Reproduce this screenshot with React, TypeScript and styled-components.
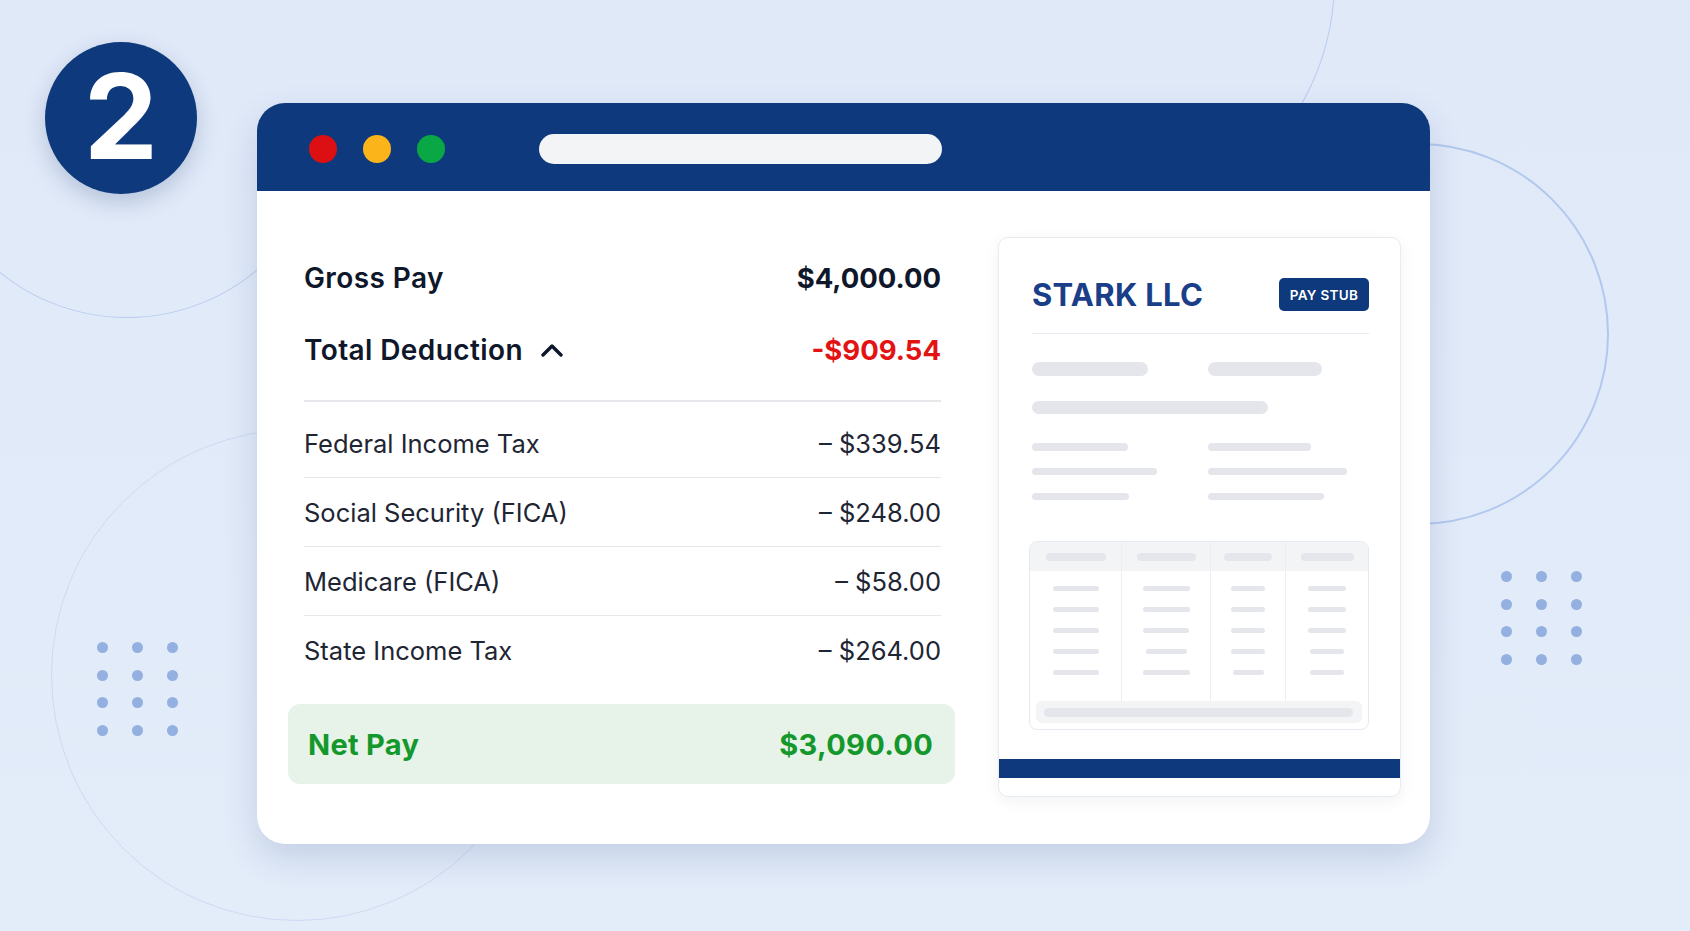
import React from "react";
import styled, { createGlobalStyle } from "styled-components";

const GlobalStyle = createGlobalStyle`
  html, body {
    margin: 0;
    padding: 0;
    background: #e1eaf8;
  }
  body {
    font-family: Inter, "Noto Sans", "Liberation Sans", sans-serif;
    -webkit-font-smoothing: antialiased;
  }
`;

const NAVY = "#0e397d";

type Side = "all" | "bottom" | "right";

const Page = styled.div`
  position: relative;
  width: 1690px;
  height: 931px;
  overflow: hidden;
  background: linear-gradient(180deg, #e0e9f8 0%, #e3ecf9 100%);
`;

// background decorations: thin rings, some only partly drawn
const Ring = styled.div<{ cx: number; cy: number; r: number; tone: string; w: number; side?: Side }>`
  position: absolute;
  left: ${p => p.cx - p.r}px;
  top: ${p => p.cy - p.r}px;
  width: ${p => p.r * 2}px;
  height: ${p => p.r * 2}px;
  border-radius: 50%;
  border: ${p => p.w}px solid transparent;
  ${p =>
    !p.side || p.side === "all"
      ? `border-color: ${p.tone};`
      : `border-${p.side}-color: ${p.tone};`}
  box-sizing: border-box;
  pointer-events: none;
`;

const DotGrid = styled.div<{ x: number; y: number }>`
  position: absolute;
  left: ${p => p.x}px;
  top: ${p => p.y}px;
  display: grid;
  grid-template-columns: repeat(3, 11px);
  grid-auto-rows: 11px;
  column-gap: 24px;
  row-gap: 16.5px;
`;

const Dot = styled.span`
  width: 11px;
  height: 11px;
  border-radius: 50%;
  background: #93b0e0;
`;

const Stage = styled.div`
  position: relative;
  display: flex;
  align-items: flex-start;
  gap: 60px;
  padding: 42px 0 0 45px;
`;

const StepBadge = styled.div`
  flex: none;
  width: 152px;
  height: 152px;
  border-radius: 50%;
  background: ${NAVY};
  color: #fff;
  display: flex;
  align-items: center;
  justify-content: center;
  font-size: 118px;
  font-weight: 700;
  line-height: 1;
  padding-bottom: 4px;
  box-sizing: border-box;
  box-shadow: 0 8px 22px rgba(22, 54, 110, 0.22);
`;

const BrowserWindow = styled.div`
  margin-top: 61px;
  width: 1173px;
  height: 741px;
  border-radius: 28px;
  background: #fff;
  overflow: hidden;
  display: flex;
  flex-direction: column;
  box-shadow: 0 14px 34px rgba(30, 64, 130, 0.16);
`;

const TitleBar = styled.div`
  flex: none;
  height: 88px;
  background: ${NAVY};
  display: flex;
  align-items: center;
  padding-left: 52px;
  padding-top: 3px;
  box-sizing: border-box;
`;

const Lights = styled.div`
  display: flex;
  gap: 26px;
`;

const Light = styled.span<{ color: string }>`
  width: 28px;
  height: 28px;
  border-radius: 50%;
  background: ${p => p.color};
`;

const UrlBar = styled.div`
  margin-left: 94px;
  width: 403px;
  height: 30px;
  border-radius: 15px;
  background: #f3f4f6;
`;

const WindowBody = styled.div`
  flex: 1;
  display: flex;
  align-items: flex-start;
  gap: 43px;
  padding: 0 29px 0 31px;
`;

const Summary = styled.div`
  width: 667px;
  padding-top: 65px;
  display: flex;
  flex-direction: column;
`;

const TotalRow = styled.div`
  height: 44px;
  padding: 0 14px 0 16px;
  display: flex;
  align-items: center;
  justify-content: space-between;
  & + & {
    margin-top: 28px;
  }
`;

const TotalLabel = styled.div`
  display: flex;
  align-items: center;
  gap: 17px;
  font-size: 28px;
  font-weight: 600;
  color: #0f172a;
  letter-spacing: 0.4px;
`;

const Amount = styled.div<{ tone?: string }>`
  font-size: 27.5px;
  font-weight: 700;
  color: ${p => p.tone || "#0f172a"};
`;

const Rule = styled.div`
  margin: 28px 14px 0 16px;
  height: 2px;
  background: #e5e7eb;
`;

const Deductions = styled.div`
  padding: 7px 14px 0 16px;
`;

const DeductionRow = styled.div`
  height: 69px;
  display: flex;
  align-items: center;
  justify-content: space-between;
  font-size: 25.5px;
  color: #1e2533;
  box-sizing: border-box;
  &:not(:last-child) {
    border-bottom: 1.5px solid #e6e8ec;
  }
`;

const NetPay = styled.div`
  margin-top: 19px;
  height: 80px;
  border-radius: 12px;
  background: #e7f2e8;
  display: flex;
  align-items: center;
  justify-content: space-between;
  padding: 0 22px 0 20px;
  font-size: 29px;
  font-weight: 700;
  color: #14982b;
  letter-spacing: 0.3px;
`;

// pay stub preview
const Stub = styled.div`
  margin-top: 46px;
  width: 403px;
  height: 560px;
  box-sizing: border-box;
  border: 1px solid #e8ebf0;
  border-radius: 10px;
  background: #fff;
  box-shadow: 0 4px 16px rgba(20, 40, 80, 0.06);
  overflow: hidden;
  display: flex;
  flex-direction: column;
`;

const StubInner = styled.div`
  padding: 40px 31px 0 33px;
  display: flex;
  flex-direction: column;
`;

const StubHead = styled.div`
  height: 33px;
  display: flex;
  align-items: center;
  justify-content: space-between;
`;

const Company = styled.div`
  font-size: 31px;
  font-weight: 700;
  color: #1a3e88;
  letter-spacing: 0.3px;
`;

const StubTag = styled.div`
  height: 33px;
  width: 90px;
  border-radius: 5px;
  background: ${NAVY};
  color: #fff;
  font-size: 13.5px;
  font-weight: 600;
  letter-spacing: 0.3px;
  display: flex;
  align-items: center;
  justify-content: center;
`;

const StubRule = styled.div`
  margin-top: 22px;
  height: 1px;
  background: #e6e9ef;
`;

const SkeletonRow = styled.div<{ gap: number }>`
  margin-top: ${p => p.gap}px;
  display: grid;
  grid-template-columns: 176px 1fr;
`;

const Bar = styled.span<{ w: number; h: number }>`
  display: block;
  width: ${p => p.w}px;
  height: ${p => p.h}px;
  border-radius: ${p => p.h / 2}px;
  background: #e4e6eb;
`;

const Table = styled.div`
  margin: 41px 0 0 -3px;
  width: 340px;
  height: 189px;
  box-sizing: border-box;
  border: 1.5px solid #e6e9ef;
  border-radius: 8px;
  overflow: hidden;
  display: flex;
  flex-direction: column;
`;

const Columns = styled.div`
  display: grid;
  grid-template-columns: 91px 89px 75px 1fr;
  height: 159px;
`;

const Column = styled.div`
  display: flex;
  flex-direction: column;
  align-items: center;
  & + & {
    border-left: 1.5px solid #eceef2;
  }
`;

const ColumnHead = styled.div`
  align-self: stretch;
  height: 29px;
  background: #f3f4f6;
  display: flex;
  align-items: center;
  justify-content: center;
`;

const ColumnLines = styled.div`
  padding-top: 15px;
  display: flex;
  flex-direction: column;
  align-items: center;
  gap: 16px;
`;

const TableFoot = styled.div`
  margin: 0 6px;
  height: 22px;
  border-radius: 6px;
  background: #f3f4f6;
  display: flex;
  align-items: center;
  padding: 0 8px;
`;

const StubStripe = styled.div`
  margin-top: 29px;
  height: 19px;
  background: ${NAVY};
`;

const Chevron = () => (
  <svg width="24" height="14" viewBox="0 0 24 14" fill="none">
    <polyline points="3,12 12,3 21,12" stroke="#0f172a" strokeWidth="3.4" strokeLinecap="round" strokeLinejoin="round" />
  </svg>
);

const deductions = [
  { label: "Federal Income Tax", amount: "\u2013 $339.54" },
  { label: "Social Security (FICA)", amount: "\u2013 $248.00" },
  { label: "Medicare (FICA)", amount: "\u2013 $58.00" },
  { label: "State Income Tax", amount: "\u2013 $264.00" },
];

const stubColumns = [
  { head: 60, lines: [46, 46, 46, 46, 46] },
  { head: 59, lines: [47, 47, 46, 41, 47] },
  { head: 48, lines: [34, 34, 34, 34, 31] },
  { head: 53, lines: [38, 38, 38, 34, 34] },
];

const skeleton = [
  { gap: 28, h: 14, left: 116, right: 114 },
  { gap: 25, h: 13, left: 236, right: 0 },
  { gap: 29, h: 8, left: 96, right: 103 },
  { gap: 17, h: 7, left: 125, right: 139 },
  { gap: 18, h: 7, left: 97, right: 116 },
];

const dots = Array.from({ length: 12 });

export default function App() {
  return (
    <>
      <GlobalStyle />
      <Page>
        <Ring cx={127} cy={116} r={202} tone="#b9cdef" w={1.5} side="bottom" />
        <Ring cx={1085} cy={-20} r={250} tone="#b9cdef" w={1.5} side="right" />
        <Ring cx={1418} cy={334} r={191} tone="#b2c8ee" w={2} />
        <Ring cx={297} cy={675} r={246} tone="#cddaf2" w={1.5} />
        <DotGrid x={97} y={642}>
          {dots.map((_, i) => <Dot key={i} />)}
        </DotGrid>
        <DotGrid x={1501} y={571}>
          {dots.map((_, i) => <Dot key={i} />)}
        </DotGrid>

        <Stage>
          <StepBadge>2</StepBadge>
          <BrowserWindow>
            <TitleBar>
              <Lights>
                <Light color="#dc0f13" />
                <Light color="#fbb51a" />
                <Light color="#0aa845" />
              </Lights>
              <UrlBar />
            </TitleBar>
            <WindowBody>
              <Summary>
                <TotalRow>
                  <TotalLabel>Gross Pay</TotalLabel>
                  <Amount>$4,000.00</Amount>
                </TotalRow>
                <TotalRow>
                  <TotalLabel>
                    Total Deduction
                    <Chevron />
                  </TotalLabel>
                  <Amount tone="#e31313">-$909.54</Amount>
                </TotalRow>
                <Rule />
                <Deductions>
                  {deductions.map(d => (
                    <DeductionRow key={d.label}>
                      <span>{d.label}</span>
                      <span>{d.amount}</span>
                    </DeductionRow>
                  ))}
                </Deductions>
                <NetPay>
                  <span>Net Pay</span>
                  <span>$3,090.00</span>
                </NetPay>
              </Summary>

              <Stub>
                <StubInner>
                  <StubHead>
                    <Company>STARK LLC</Company>
                    <StubTag>PAY STUB</StubTag>
                  </StubHead>
                  <StubRule />
                  {skeleton.map((s, i) => (
                    <SkeletonRow key={i} gap={s.gap}>
                      <Bar w={s.left} h={s.h} />
                      {s.right > 0 && <Bar w={s.right} h={s.h} />}
                    </SkeletonRow>
                  ))}
                  <Table>
                    <Columns>
                      {stubColumns.map((c, i) => (
                        <Column key={i}>
                          <ColumnHead>
                            <Bar w={c.head} h={8} />
                          </ColumnHead>
                          <ColumnLines>
                            {c.lines.map((w, j) => (
                              <Bar key={j} w={w} h={5} />
                            ))}
                          </ColumnLines>
                        </Column>
                      ))}
                    </Columns>
                    <TableFoot>
                      <Bar w={309} h={9} />
                    </TableFoot>
                  </Table>
                </StubInner>
                <StubStripe />
              </Stub>
            </WindowBody>
          </BrowserWindow>
        </Stage>
      </Page>
    </>
  );
}
